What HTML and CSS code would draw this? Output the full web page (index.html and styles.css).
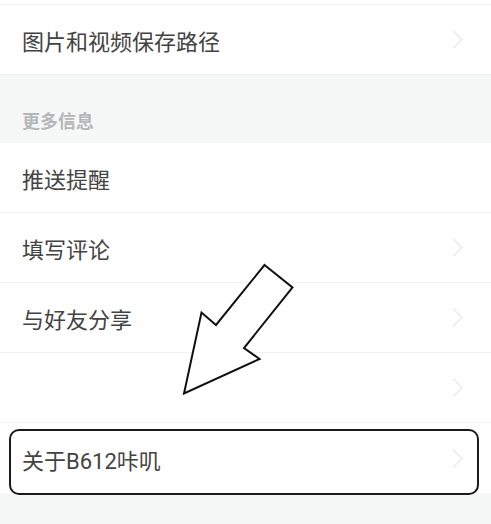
FILE: index.html
```html
<!DOCTYPE html>
<html lang="zh">
<head>
<meta charset="utf-8">
<link rel="stylesheet" href="styles.css">
</head>
<body>
<div class="page">
  <div class="row row-cut"></div>
  <div class="row"><span class="label">图片和视频保存路径</span><span class="chev"></span></div>
  <div class="section"><span class="section-title">更多信息</span></div>
  <div class="row"><span class="label">推送提醒</span></div>
  <div class="row"><span class="label">填写评论</span><span class="chev"></span></div>
  <div class="row"><span class="label">与好友分享</span><span class="chev"></span></div>
  <div class="row"><span class="label"></span><span class="chev"></span></div>
  <div class="row row-last"><span class="label">关于B612咔叽</span><span class="chev"></span><div class="mark-box"></div></div>
  <div class="footer"></div>
  <svg class="arrow" width="491" height="524" viewBox="0 0 491 524">
    <polygon points="264.5,265 292.5,287.5 244,348 259.5,359 184,393.5 201.5,312.5 216,325" fill="#fff" stroke="#111" stroke-width="2" stroke-linejoin="miter"/>
  </svg>
</div>
</body>
</html>
```
FILE: styles.css
```css
html, body {
  margin: 0;
  padding: 0;
  background: #ffffff;
}
body {
  font-family: Roboto, "Noto Sans CJK SC", "Noto Sans", sans-serif;
  width: 491px;
  height: 524px;
  overflow: hidden;
}
.page {
  position: relative;
  width: 491px;
  height: 524px;
}
.row {
  position: relative;
  height: 69px;
  display: flex;
  align-items: center;
  justify-content: space-between;
  padding: 0 31px 0 22px;
  border-bottom: 1px solid #f1f2f2;
  background: #fff;
}
.row-cut {
  height: 4px;
}
.label {
  font-size: 22px;
  color: #434343;
  line-height: 1;
  padding-top: 7px;
}
.chev {
  width: 13px;
  height: 13px;
  border-top: 1.5px solid #e3e3e3;
  border-right: 1.5px solid #e3e3e3;
  transform: rotate(45deg);
  box-sizing: border-box;
}
.section {
  height: 68px;
  background: #f6f7f7;
  display: flex;
  align-items: flex-end;
  padding: 0 0 12px 22px;
  box-sizing: border-box;
}
.section-title {
  font-size: 18px;
  font-weight: 700;
  color: #b4b7b9;
  line-height: 1;
}
.row-last {
  height: 70px;
  border-bottom: none;
}
.mark-box {
  position: absolute;
  left: 9px;
  top: 6px;
  width: 466px;
  height: 62px;
  border: 2px solid #1a1a1a;
  border-radius: 10px;
}
.footer {
  height: 40px;
  background: #f6f7f7;
}
.arrow {
  position: absolute;
  left: 0;
  top: 0;
}
```
